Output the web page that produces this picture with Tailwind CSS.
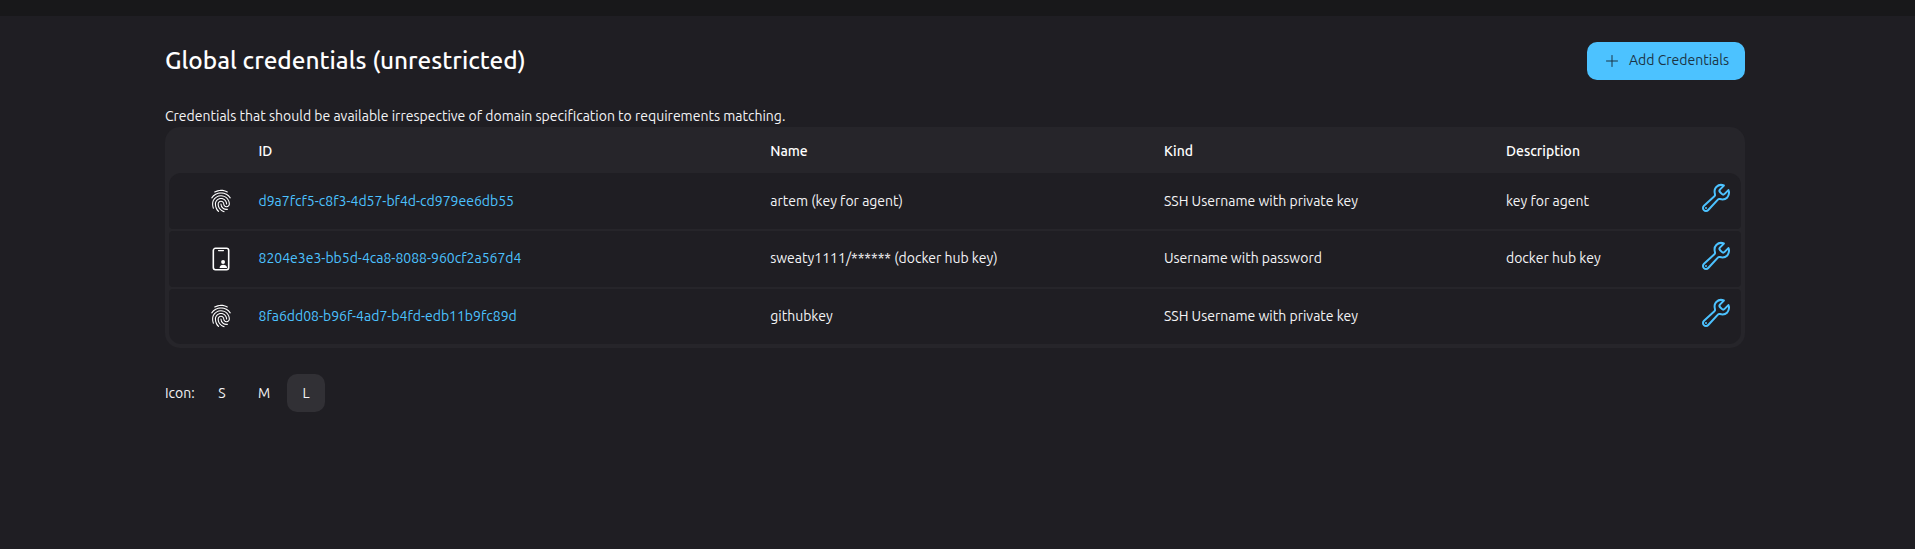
<!DOCTYPE html>
<html lang="en">
<head>
<meta charset="utf-8">
<title>Global credentials (unrestricted)</title>
<script src="https://cdn.jsdelivr.net/npm/@tailwindcss/browser@4"></script>
</head>
<body class="h-screen overflow-hidden bg-[#1f1e23] font-['Ubuntu','Noto_Sans',sans-serif] text-[14px] leading-5 text-[#f4f4f6]">
<svg class="hidden">
  <symbol id="finger" viewBox="0 0 512 512"><path fill="currentColor" d="M390.42 75.28a10.45 10.45 0 01-5.32-1.44C340.72 50.08 302.35 40 256.35 40c-45.77 0-89.23 11.28-128.76 33.84C122 77 115.11 74.8 111.87 69a12.4 12.4 0 014.63-16.32A281.81 281.81 0 01256.35 16c49.23 0 92.23 11.28 139.39 36.48a12 12 0 014.85 16.08 11.3 11.3 0 01-10.17 6.72zm-330.79 126a11.73 11.73 0 01-6.7-2.16 12.26 12.26 0 01-2.78-16.8c22.89-33.6 52-60 86.69-78.48 72.58-38.84 165.51-39.12 238.32-.24 34.68 18.48 63.8 44.64 86.69 78a12.29 12.29 0 01-2.78 16.8 11.26 11.26 0 01-16.18-2.88c-20.8-30.24-47.16-54-78.36-70.56-66.34-35.28-151.18-35.28-217.29.24-31.44 16.8-57.79 40.8-78.59 71a10 10 0 01-9.02 5.08zM204.1 491a10.66 10.66 0 01-8.09-3.6C175.9 466.48 165 453 149.55 424c-16-29.52-24.27-65.52-24.27-104.16 0-71.28 58.71-129.36 130.84-129.36S387 248.56 387 319.84a11.56 11.56 0 11-23.11 0c0-58.08-48.32-105.36-107.72-105.36S148.4 261.76 148.4 319.84c0 34.56 7.39 66.48 21.49 92.4 14.8 27.6 25 39.36 42.77 58.08a12.67 12.67 0 010 17 12.44 12.44 0 01-8.56 3.68zm165.75-44.4c-27.51 0-51.78-7.2-71.66-21.36a129.1 129.1 0 01-55-105.36 11.57 11.57 0 1123.12 0 104.28 104.28 0 0044.84 85.44c16.41 11.52 35.6 17 58.72 17a147.41 147.41 0 0024-2.4c6.24-1.2 12.25 3.12 13.4 9.84a11.92 11.92 0 01-9.47 13.92 152.28 152.28 0 01-27.95 2.88zM323.38 496a13 13 0 01-3-.48c-36.76-10.56-60.8-24.72-86-50.4-32.37-33.36-50.16-77.76-50.16-125.28 0-38.88 31.9-70.56 71.19-70.56s71.2 31.68 71.2 70.56c0 25.68 21.5 46.56 48.08 46.56s48.08-20.88 48.08-46.56c0-90.48-75.13-163.92-167.59-163.92-65.65 0-125.75 37.92-152.79 96.72-9 19.44-13.64 42.24-13.64 67.2 0 18.72 1.61 48.24 15.48 86.64 2.32 6.24-.69 13.2-6.7 15.36a11.34 11.34 0 01-14.79-7 276.39 276.39 0 01-16.88-95c0-28.8 5.32-55 15.72-77.76 30.75-67 98.94-110.4 173.6-110.4 105.18 0 190.71 84.24 190.71 187.92 0 38.88-31.9 70.56-71.2 70.56s-71.2-31.68-71.2-70.56C303.5 294.16 282 273.28 255.42 273.28s-48.08 20.88-48.08 46.56c0 41 15.26 79.44 43.23 108.24 22 22.56 43 35 75.59 44.16 6.24 1.68 9.94 8.4 8.32 14.88a11.27 11.27 0 01-11.1 8.88z"/></symbol>
  <symbol id="card" viewBox="0 0 512 512"><rect x="92" y="28" width="328" height="456" rx="46" fill="none" stroke="currentColor" stroke-width="34"/><path d="M204 76h104" stroke="currentColor" stroke-width="28" stroke-linecap="round"/><circle cx="300" cy="320" r="42" fill="currentColor"/><path d="M226 440c2-42 34-64 76-64s80 22 84 64c0 6-4 10-10 10H236c-6 0-10-4-10-10z" fill="currentColor"/></symbol>
  <symbol id="wrench" viewBox="0 0 512 512"><path d="M393.87 190a32.1 32.1 0 01-45.25 0l-26.57-26.57a32.09 32.09 0 010-45.26L382.19 58a1 1 0 00-.3-1.64c-38.82-16.64-89.15-8.16-121.11 23.57-30.58 30.35-32.32 76-21.12 115.84a31.93 31.93 0 01-9.06 32.08L64 380a48.17 48.17 0 1068 68l153.86-167a31.93 31.93 0 0131.6-9.13c39.54 10.59 84.54 8.6 114.72-21.19 32.49-32 39.5-88.56 23.75-120.93a1 1 0 00-1.6-.26z" fill="none" stroke="currentColor" stroke-width="32" stroke-linecap="round" stroke-miterlimit="10"/><circle cx="96" cy="416" r="16" fill="currentColor"/></symbol>
</svg>

<div class="h-4 bg-[#18181a]"></div>
<main class="ml-[165px] w-[1580px] pt-[26px]">
  <header class="flex h-[38px] items-center justify-between">
    <h1 class="-mt-0.5 text-[24.4px] leading-8 font-medium whitespace-nowrap text-white">Global credentials (unrestricted)</h1>
    <a class="flex h-[38px] w-[158px] items-center rounded-[10px] bg-[#4cc2ff] pl-[19px] text-[#1b3445]">
      <svg class="size-3" viewBox="0 0 12 12"><path d="M6 .5v11M.5 6h11" stroke="currentColor" stroke-width="1" stroke-linecap="round"/></svg>
      <span class="-mt-0.5 ml-[11px] whitespace-nowrap">Add Credentials</span>
    </a>
  </header>
  <p class="mt-[26px] h-[21px] whitespace-nowrap">Credentials that should be available irrespective of domain specification to requirements matching.</p>

  <section class="h-[221px] overflow-hidden rounded-[15px] bg-[#26252a] px-1 pb-1">
    <div class="grid h-[46px] grid-cols-[89.5px_511.7px_393.8px_342px_170px_1fr] items-center pt-px font-medium text-white">
      <span></span><span>ID</span><span>Name</span><span>Kind</span><span>Description</span>
    </div>
    <div class="flex flex-col gap-0.5 whitespace-nowrap">
      <div class="grid h-[56px] grid-cols-[89.5px_511.7px_393.8px_342px_170px_1fr] items-center rounded-t-[12px] rounded-b-[4px] bg-[#1f1e23]">
        <svg class="ml-10 size-6 text-white"><use href="#finger"/></svg>
        <a class="text-[#4cc2ff]">d9a7fcf5-c8f3-4d57-bf4d-cd979ee6db55</a>
        <span>artem (key for agent)</span>
        <span>SSH Username with private key</span>
        <span>key for agent</span>
        <svg class="mr-[9px] mb-1.5 size-8 justify-self-end text-[#4cc2ff]"><use href="#wrench"/></svg>
      </div>
      <div class="grid h-[56px] grid-cols-[89.5px_511.7px_393.8px_342px_170px_1fr] items-center rounded-[4px] bg-[#1f1e23]">
        <svg class="ml-10 size-6 text-white"><use href="#card"/></svg>
        <a class="-mt-0.5 text-[#4cc2ff]">8204e3e3-bb5d-4ca8-8088-960cf2a567d4</a>
        <span class="-mt-0.5">sweaty1111/****** (docker hub key)</span>
        <span class="-mt-0.5">Username with password</span>
        <span class="-mt-0.5">docker hub key</span>
        <svg class="mr-[9px] mb-1.5 size-8 justify-self-end text-[#4cc2ff]"><use href="#wrench"/></svg>
      </div>
      <div class="grid h-[55px] grid-cols-[89.5px_511.7px_393.8px_342px_170px_1fr] items-center rounded-t-[4px] rounded-b-[12px] bg-[#1f1e23] pb-px">
        <svg class="ml-10 size-6 text-white"><use href="#finger"/></svg>
        <a class="text-[#4cc2ff]">8fa6dd08-b96f-4ad7-b4fd-edb11b9fc89d</a>
        <span>githubkey</span>
        <span>SSH Username with private key</span>
        <span></span>
        <svg class="mr-[9px] mb-1.5 size-8 justify-self-end text-[#4cc2ff]"><use href="#wrench"/></svg>
      </div>
    </div>
  </section>

  <div class="mt-[26px] flex h-[38px] items-center">
    <span class="w-[38px]">Icon:</span>
    <div class="flex gap-[4px] text-center">
      <a class="w-[38px] leading-[38px]">S</a>
      <a class="w-[38px] leading-[38px]">M</a>
      <a class="w-[38px] rounded-[10px] bg-[#313035] leading-[38px]">L</a>
    </div>
  </div>
</main>
</body>
</html>
